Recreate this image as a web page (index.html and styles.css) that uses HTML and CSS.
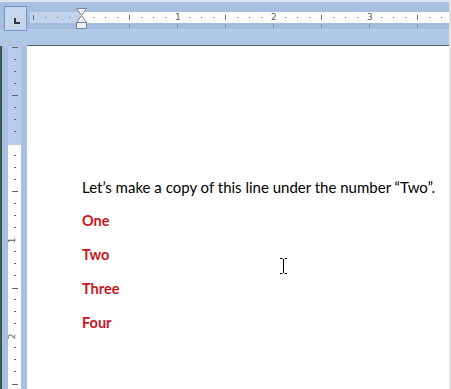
FILE: index.html
```html
<!DOCTYPE html>
<html>
  <head>
    <meta charset="UTF-8">
    <title>Document</title>
    <link rel="stylesheet" href="styles.css">
  </head>
  <body>
    <div class="window">
      <div class="topbar">
        <div class="tabsel"><span class="tabsel-l"></span></div>
        <div class="hruler">
          <svg class="hruler-svg" width="419" height="11" viewBox="30 0 419 11">
            <rect x="30" y="0" width="50" height="11" fill="#c2d4ec"/>
            <rect x="80" y="0" width="369" height="11" fill="#fcfcfa"/>
            <g fill="#6a6f78">
              <rect x="33" y="3" width="1" height="5"/>
              <rect x="45" y="5" width="1" height="1"/>
              <rect x="57" y="5" width="1" height="1"/>
              <rect x="69" y="5" width="1" height="1"/>
              <rect x="93" y="5" width="1" height="1"/>
              <rect x="105" y="5" width="1" height="1"/>
              <rect x="117" y="5" width="1" height="1"/>
              <rect x="129" y="3" width="1" height="5"/>
              <rect x="141" y="5" width="1" height="1"/>
              <rect x="153" y="5" width="1" height="1"/>
              <rect x="165" y="5" width="1" height="1"/>
              <rect x="189" y="5" width="1" height="1"/>
              <rect x="201" y="5" width="1" height="1"/>
              <rect x="213" y="5" width="1" height="1"/>
              <rect x="225" y="3" width="1" height="5"/>
              <rect x="237" y="5" width="1" height="1"/>
              <rect x="249" y="5" width="1" height="1"/>
              <rect x="261" y="5" width="1" height="1"/>
              <rect x="285" y="5" width="1" height="1"/>
              <rect x="297" y="5" width="1" height="1"/>
              <rect x="309" y="5" width="1" height="1"/>
              <rect x="321" y="3" width="1" height="5"/>
              <rect x="333" y="5" width="1" height="1"/>
              <rect x="345" y="5" width="1" height="1"/>
              <rect x="357" y="5" width="1" height="1"/>
              <rect x="381" y="5" width="1" height="1"/>
              <rect x="393" y="5" width="1" height="1"/>
              <rect x="405" y="5" width="1" height="1"/>
              <rect x="417" y="3" width="1" height="5"/>
              <rect x="429" y="5" width="1" height="1"/>
              <rect x="441" y="5" width="1" height="1"/>
            </g>
          </svg>
          <span class="num n1">1</span>
          <span class="num n2">2</span>
          <span class="num n3">3</span>
        </div>
        <div class="tabmarks">
          <svg width="449" height="6">
            <g fill="#7d93b4">
              <rect x="129" y="1" width="1" height="4"/>
              <rect x="177" y="1" width="1" height="4"/>
              <rect x="225" y="1" width="1" height="4"/>
              <rect x="273" y="1" width="1" height="4"/>
              <rect x="321" y="1" width="1" height="4"/>
              <rect x="369" y="1" width="1" height="4"/>
              <rect x="417" y="1" width="1" height="4"/>
            </g>
          </svg>
        </div>
        <div class="indent">
          <svg width="11" height="21" viewBox="0 0 11 21">
            <path d="M0.5 0.5 H10.5 L5.5 7.5 Z" fill="#eef2f8" stroke="#7a8594"/>
            <path d="M5.5 7.5 L10.5 14.5 H0.5 Z" fill="#eef2f8" stroke="#7a8594"/>
            <rect x="0.5" y="14.5" width="10" height="6" fill="#eef2f8" stroke="#7a8594"/>
          </svg>
        </div>
        <div class="topbar-edge"></div>
      </div>

      <div class="main">
        <div class="side">
          <div class="vruler">
            <svg width="13" height="343" viewBox="0 46 13 343">
              <rect x="0" y="46" width="13" height="99" fill="#b9cdeb"/>
              <rect x="0" y="145" width="13" height="244" fill="#ffffff"/>
              <g fill="#5e6470">
                <rect x="4" y="47" width="6" height="1"/>
                <rect x="6" y="59" width="2" height="1"/>
                <rect x="6" y="71" width="2" height="1"/>
                <rect x="6" y="83" width="2" height="1"/>
                <rect x="4" y="95" width="6" height="1"/>
                <rect x="6" y="107" width="2" height="1"/>
                <rect x="6" y="119" width="2" height="1"/>
                <rect x="6" y="131" width="2" height="1"/>
                <rect x="6" y="155" width="2" height="1"/>
                <rect x="6" y="167" width="2" height="1"/>
                <rect x="6" y="179" width="2" height="1"/>
                <rect x="4" y="191" width="6" height="1"/>
                <rect x="6" y="203" width="2" height="1"/>
                <rect x="6" y="215" width="2" height="1"/>
                <rect x="6" y="227" width="2" height="1"/>
                <rect x="6" y="251" width="2" height="1"/>
                <rect x="6" y="263" width="2" height="1"/>
                <rect x="6" y="275" width="2" height="1"/>
                <rect x="4" y="288" width="6" height="1"/>
                <rect x="6" y="299" width="2" height="1"/>
                <rect x="6" y="311" width="2" height="1"/>
                <rect x="6" y="323" width="2" height="1"/>
                <rect x="6" y="347" width="2" height="1"/>
                <rect x="6" y="359" width="2" height="1"/>
                <rect x="6" y="371" width="2" height="1"/>
                <rect x="4" y="384" width="6" height="1"/>
              </g>
            </svg>
            <span class="vnum v1">1</span>
            <span class="vnum v2">2</span>
          </div>
        </div>

        <div class="page">
          <p class="intro">Let’s make a copy of this line under the number “Two”.</p>
          <p class="item">One</p>
          <p class="item">Two</p>
          <p class="item">Three</p>
          <p class="item">Four</p>

          <svg class="ibeam" width="7" height="16" viewBox="0 0 7 16">
            <path d="M0 0.5 H2.5 M4.5 0.5 H7 M3.5 1 V15 M0 15.5 H2.5 M4.5 15.5 H7" stroke="#000" stroke-width="1" fill="none"/>
          </svg>
        </div>
      </div>
    </div>
  </body>
</html>
```

FILE: styles.css
```css
body
{
  margin: 0;
  padding: 0;
  background: #ffffff;
}

.window
{
  width: 451px;
  height: 389px;
  overflow: hidden;
  display: flex;
  flex-direction: column;
  background: #ffffff;
  font-family: "Lato", "Open Sans", sans-serif;
}

/* ---------- top ruler bar ---------- */
.topbar
{
  position: relative;
  height: 46px;
  flex: none;
  background: linear-gradient(to bottom, #dbe6f2 0, #dbe6f2 2px, #a8c0df 2px, #a8c0df 23px, #a3bbdc 23px, #a3bbdc 29px, #b3c9e8 29px, #b0c6e5 45px);
  border-right: 2px solid #e2e2e2;
  box-sizing: border-box;
}

.tabsel
{
  position: absolute;
  left: 4px;
  top: 6px;
  width: 23px;
  height: 25px;
  box-sizing: border-box;
  border: 1px solid #7496c6;
  background: #c6d7ee;
}

.tabsel-l
{
  position: absolute;
  left: 9px;
  top: 11px;
  width: 4px;
  height: 4px;
  border-left: 2px solid #303840;
  border-bottom: 2px solid #303840;
}

.hruler
{
  position: absolute;
  left: 30px;
  top: 12px;
  width: 419px;
  height: 11px;
}

.hruler-svg
{
  display: block;
}

.num
{
  position: absolute;
  top: -1px;
  font-family: "DejaVu Sans", sans-serif;
  font-size: 9px;
  line-height: 12px;
  color: #5a5f68;
}

.n1 { left: 145px; }
.n2 { left: 241px; }
.n3 { left: 337px; }

.tabmarks
{
  position: absolute;
  left: 0;
  top: 23px;
  line-height: 0;
}

.indent
{
  position: absolute;
  left: 76px;
  top: 8px;
  line-height: 0;
}

.topbar-edge
{
  position: absolute;
  left: 27px;
  right: 0;
  bottom: 0;
  height: 1px;
  background: #5b6470;
}

/* ---------- document area ---------- */
.main
{
  flex: 1;
  display: flex;
}

.side
{
  width: 27px;
  flex: none;
  box-sizing: border-box;
  border-left: 2px solid #3a5a4e;
  padding-left: 6px;
  background: #a9c1e0;
}

.vruler
{
  position: relative;
  width: 13px;
  line-height: 0;
}

.vnum
{
  position: absolute;
  left: 2px;
  font-family: "DejaVu Sans", sans-serif;
  font-size: 9px;
  line-height: 9px;
  color: #5a5f68;
  transform: rotate(-90deg);
}

.v1 { top: 190px; }
.v2 { top: 286px; }

.page
{
  position: relative;
  flex: 1;
  padding: 124px 0 0 55px;
  border-right: 2px solid #e2e2e2;
  color: #000000;
}

.page p
{
  margin: 0;
  font-size: 15px;
  line-height: 34px;
}

.page .item
{
  color: #c8161d;
  font-weight: bold;
  font-size: 14.5px;
}

.ibeam
{
  position: absolute;
  left: 253px;
  top: 212px;
}
```
